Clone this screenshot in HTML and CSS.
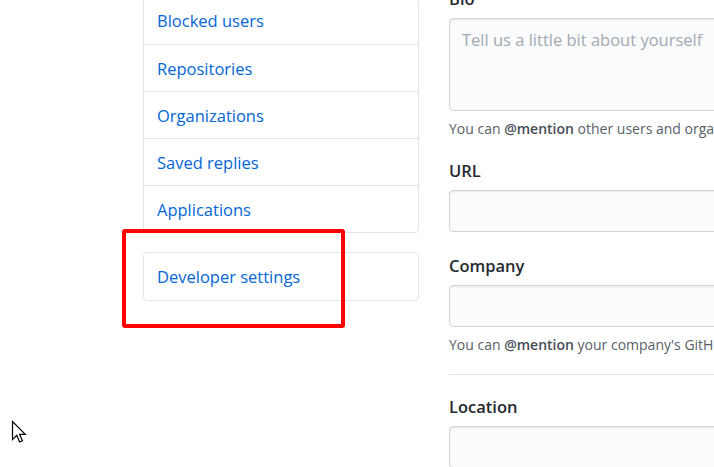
FILE: index.html
```html
<!DOCTYPE html>
<html>
<head>
<meta charset="utf-8">
<link rel="stylesheet" href="styles.css">
</head>
<body>
<div class="page">
  <aside class="sidebar">
    <nav class="menu">
      <a class="menu-item" href="#">Blocked users</a>
      <a class="menu-item" href="#">Repositories</a>
      <a class="menu-item" href="#">Organizations</a>
      <a class="menu-item" href="#">Saved replies</a>
      <a class="menu-item" href="#">Applications</a>
    </nav>
    <nav class="menu menu-dev">
      <a class="menu-item" href="#">Developer settings</a>
    </nav>
  </aside>
  <main class="form">
    <div class="group group-bio">
      <label class="label">Bio</label>
      <div class="field textarea"><span class="placeholder">Tell us a little bit about yourself</span></div>
      <p class="note">You can <strong>@mention</strong> other users and organizations to link to them.</p>
    </div>
    <div class="group group-url">
      <label class="label">URL</label>
      <div class="field input"></div>
    </div>
    <div class="group">
      <label class="label">Company</label>
      <div class="field input"></div>
      <p class="note">You can <strong>@mention</strong> your company's GitHub organization to link it.</p>
    </div>
    <hr class="divider">
    <div class="group">
      <label class="label">Location</label>
      <div class="field input"></div>
    </div>
  </main>
</div>
<div class="highlight"></div>
<svg class="cursor" width="16" height="24" viewBox="0 0 16 24">
  <path d="M1.5 1.5 L1.5 19.5 L5.8 15.4 L8.6 22 L11.4 20.8 L8.6 14.3 L14.3 14.3 Z" fill="#fff" stroke="#000" stroke-width="1.2" stroke-linejoin="miter"/>
</svg>
</body>
</html>
```

FILE: styles.css
```css
* { box-sizing: border-box; }
html, body { margin: 0; padding: 0; background: #fff; overflow: hidden; }
body {
  width: 714px;
  height: 467px;
  position: relative;
  font-family: "Open Sans", "Noto Sans", sans-serif;
  color: #24292e;
}
.page {
  display: flex;
  align-items: flex-start;
  gap: 30px;
  padding-left: 143px;
  margin-top: -12px;
}
.sidebar {
  width: 276px;
  flex: none;
  margin-top: 9px;
}
.menu {
  display: flex;
  flex-direction: column;
  border: 1px solid #e1e4e8;
  border-radius: 4px;
  background: #fff;
}
.menu-item {
  display: flex;
  align-items: center;
  height: 47px;
  padding-left: 13px;
  font-size: 16.5px;
  color: #0366d6;
  text-decoration: none;
  border-bottom: 1px solid #e1e4e8;
}
.menu-item:first-child { padding-bottom: 2px; }
.menu-item:last-child { border-bottom: none; height: 46px; }
.menu-dev { margin-top: 19px; }
.menu-dev .menu-item:last-child { height: 47px; padding-bottom: 0; }
.form {
  flex: none;
  width: 420px;
}
.group { margin-bottom: 22px; }
.group-bio { margin-bottom: 21px; }
.group-url { margin-bottom: 23px; }
.label {
  display: block;
  height: 22px;
  line-height: 22px;
  font-size: 16.5px;
  font-weight: 600;
  margin-bottom: 8px;
}
.field {
  background: #fafbfc;
  border: 1px solid #d1d5da;
  border-radius: 4px;
  box-shadow: inset 0 1px 2px rgba(27,31,35,0.075);
}
.textarea {
  height: 93px;
  padding: 9px 12px;
}
.placeholder {
  font-size: 16.5px;
  color: #a2a9b0;
}
.input { height: 42px; }
.note {
  margin: 8px 0 0;
  height: 20px;
  line-height: 20px;
  font-size: 14px;
  color: #586069;
  white-space: nowrap;
}
.note strong { color: #444d56; font-weight: 600; }
.divider {
  border: 0;
  border-top: 1px solid #e1e4e8;
  margin: -3px 0 21px;
}
.highlight {
  position: absolute;
  left: 122px;
  top: 229px;
  width: 223px;
  height: 99px;
  border: 4px solid #ff0000;
  border-radius: 3px;
}
.cursor {
  position: absolute;
  left: 11px;
  top: 420px;
}
```
